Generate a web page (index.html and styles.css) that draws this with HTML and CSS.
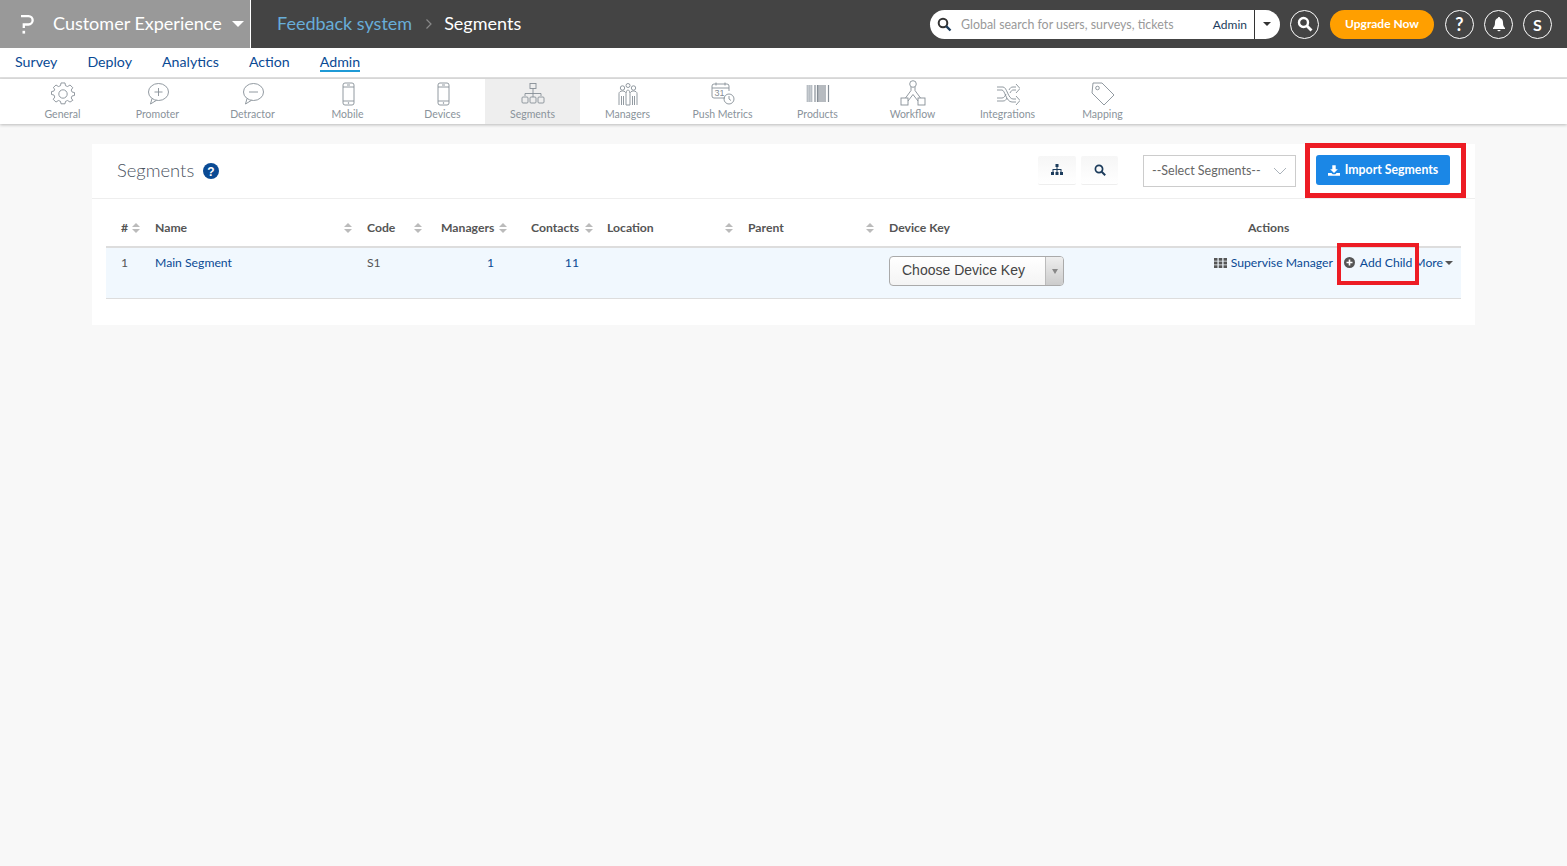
FILE: index.html
```html
<!DOCTYPE html>
<html lang="en">
<head>
<meta charset="utf-8">
<title>Segments</title>
<link rel="stylesheet" href="styles.css">
</head>
<body>
<header class="topbar">
  <div class="brand">
    <svg class="brand-logo" width="13" height="19" viewBox="0 0 13 19"><path d="M0 1.200h7.500a4 4 0 0 1 0 8.300H2.800v3.500" fill="none" stroke="#fff" stroke-width="2.300"/><rect x="1.500" y="15.800" width="2.600" height="2.800" fill="#fff"/></svg>
    <span class="brand-name">Customer Experience</span>
    <span class="caret-white"></span>
  </div>
  <div class="crumbs">
    <span class="crumb-link">Feedback system</span>
    <svg class="crumb-sep" width="8" height="12" viewBox="0 0 8 12"><path d="M1.500 1.500 6 6l-4.500 4.500" fill="none" stroke="#8a8a8a" stroke-width="1.200"/></svg>
    <span class="crumb-now">Segments</span>
  </div>
  <div class="top-right">
    <div class="search">
      <svg class="search-ico" width="15" height="15" viewBox="0 0 15 15"><circle cx="6" cy="6" r="4.300" fill="none" stroke="#333" stroke-width="2"/><path d="m9.200 9.200 4.300 4.300" stroke="#1c3c5c" stroke-width="2.400"/></svg>
      <span class="search-ph">Global search for users, surveys, tickets</span>
      <span class="search-scope">Admin</span>
      <span class="search-drop"><span class="caret-dark"></span></span>
    </div>
    <span class="round"><svg width="16" height="16" viewBox="0 0 16 16"><circle cx="6.500" cy="6.500" r="4.500" fill="none" stroke="#fff" stroke-width="2.400"/><path d="m10 10 4.500 4.500" stroke="#fff" stroke-width="2.800"/></svg></span>
    <span class="upgrade">Upgrade Now</span>
    <span class="round round-help">?</span>
    <span class="round"><svg width="14" height="16" viewBox="0 0 14 16"><path d="M7 1c-.7 0-1.100.5-1.100 1.100C3.800 2.700 3 4.400 3 6.500c0 3-.8 4.300-2 5.500v1h12v-1c-1.200-1.200-2-2.500-2-5.500 0-2.100-.8-3.800-2.900-4.400C8.100 1.500 7.700 1 7 1Z M5.300 14a1.800 1.800 0 0 0 3.400 0Z" fill="#fff"/></svg></span>
    <span class="round round-user">S</span>
  </div>
</header>

<nav class="mainnav">
  <a>Survey</a><a>Deploy</a><a>Analytics</a><a>Action</a><a class="is-active">Admin</a>
</nav>

<nav class="subnav">
  <div class="tab"><svg class="ti" width="24" height="24" viewBox="0 0 24 24"><path d="M10 1.500h4l.5 2.800 2.100.9L19 3.600 21.800 6.400 20.200 8.800l.9 2.100 2.400.5v3l-2.400.5-.9 2.100 1.600 2.400L19 21.200l-2.400-1.600-2.100.9-.5 2.500h-4l-.5-2.500-2.100-.9L5 21.200l-2.800-2.800 1.600-2.400-.9-2.100-2.400-.5v-3l2.400-.5.9-2.100L2.200 6.400 5 3.600l2.400 1.600 2.100-.9Z" transform="translate(0 -.5) scale(1 .97)" stroke-linejoin="round"/><circle cx="12" cy="12" r="4.200"/></svg><span>General</span></div>
  <div class="tab"><svg class="ti" width="24" height="24" viewBox="0 0 24 24"><ellipse cx="12.500" cy="10" rx="10" ry="8.500"/><path d="M6 16.500 4.500 22l6-3.700M8.500 10h8M12.500 6v8"/></svg><span>Promoter</span></div>
  <div class="tab"><svg class="ti" width="24" height="24" viewBox="0 0 24 24"><ellipse cx="12.500" cy="10" rx="10" ry="8.500"/><path d="M6 16.500 4.500 22l6-3.700M8 10h9"/></svg><span>Detractor</span></div>
  <div class="tab"><svg class="ti" width="24" height="24" viewBox="0 0 24 24"><rect x="7" y="1" width="11" height="22" rx="2"/><path d="M7 5h11M7 19h11M11 3h3"/><circle cx="12.500" cy="21" r=".4"/></svg><span>Mobile</span></div>
  <div class="tab tab-tuck"><svg class="ti" width="24" height="24" viewBox="0 0 24 24"><rect x="7" y="1" width="11" height="22" rx="2"/><path d="M7 5h11M7 19h11M11 3h3"/><circle cx="12.500" cy="21" r=".4"/></svg><span>Devices</span></div>
  <div class="tab is-current"><svg class="ti" width="24" height="24" viewBox="0 0 24 24"><rect x="9" y="1.500" width="6" height="5"/><path d="M12 6.500v5M4 14v-2.500h16V14M12 11.500V15"/><rect x="1" y="15" width="6" height="6" rx="1"/><rect x="9" y="15" width="6" height="6" rx="1"/><rect x="17" y="15" width="6" height="6" rx="1"/></svg><span>Segments</span></div>
  <div class="tab"><svg class="ti" width="24" height="24" viewBox="0 0 24 24"><circle cx="12" cy="3.500" r="2"/><circle cx="6.500" cy="6" r="2.200"/><circle cx="17.500" cy="6" r="2.200"/><path d="M3 23V11.500C3 10 4.500 9 6.500 9S10 10 10 11.500V23M14 23V11.500C14 10 15.500 9 17.500 9S21 10 21 11.500V23M5.500 14v9M7.500 14v9M16.500 14v9M18.500 14v9M10 23h4M10 11c.5-2 1-3 2-3s1.500 1 2 3"/></svg><span>Managers</span></div>
  <div class="tab"><svg class="ti" width="24" height="24" viewBox="0 0 24 24"><path d="M14 16H3a2 2 0 0 1-2-2V4a2 2 0 0 1 2-2h13a2 2 0 0 1 2 2v5M1 6h17M5 .5v3M14 .5v3"/><text x="3.500" y="14" class="cal">31</text><circle cx="18" cy="17" r="5"/><path d="M18 14v3l2 1.500"/></svg><span>Push Metrics</span></div>
  <div class="tab"><svg class="ti ti-bars" width="24" height="24" viewBox="0 0 24 24"><path class="bars-light" d="M1.500 3v17M3.500 3v17M5.500 3v17"/><path d="M9 3v17M11.500 3v17M13 3v17M15 3v17M17 3v17M19 3v17M22.500 3v17"/></svg><span>Products</span></div>
  <div class="tab"><svg class="ti ti-flow" width="26" height="26" viewBox="0 0 26 26"><circle cx="13" cy="4" r="3.300"/><path d="M11 7v3.500L5.500 18M15 7v3.500L20.500 18M13 14.500 8 21M13 14.500 18 21"/><rect x="1" y="18" width="7" height="7"/><rect x="18" y="18" width="7" height="7"/></svg><span>Workflow</span></div>
  <div class="tab"><svg class="ti" width="24" height="24" viewBox="0 0 24 24"><path d="M1 5h6c4 0 5 12 10 12h3M1 8h5c3 0 4 12 10 12h4M1 16h5c2 0 3-2 4-4M1 19h6c2 0 3-1 4-3M13 8c1-2 2-3 4-3h3M14 11c1-2 2-3 3-3h3M20 2l4 4.500-4 4.500M20 14l4 4.500-4 4.500"/></svg><span>Integrations</span></div>
  <div class="tab"><svg class="ti" width="24" height="24" viewBox="0 0 24 24"><path d="M2 1h9l12 12-10 10L1 11Z"/><circle cx="6.500" cy="6" r="1.800"/></svg><span>Mapping</span></div>
</nav>

<main class="page">
  <section class="card">
    <div class="card-head">
      <h1 class="card-title">Segments</h1>
      <svg class="help" width="16" height="16" viewBox="0 0 16 16"><circle cx="8" cy="8" r="8" fill="#0a4a94"/><text x="8" y="12.500" class="help-q">?</text></svg>
      <div class="head-tools">
        <span class="tool tool-a"><svg width="12" height="11" viewBox="0 0 12 11"><path d="M4.500 0h3v3h-3zM0 8h3v3H0zM4.500 8h3v3h-3zM9 8h3v3H9zM5.500 3h1v2h4v3h-1V6h-3v2h-1V6h-3v2h-1V5h4z" fill="#1c3c5c"/></svg></span>
        <span class="tool tool-b"><svg width="12" height="12" viewBox="0 0 12 12"><circle cx="5" cy="5" r="3.600" fill="none" stroke="#1c3c5c" stroke-width="1.700"/><path d="m7.700 7.700 3.500 3.500" stroke="#1c3c5c" stroke-width="2"/></svg></span>
        <div class="select"><span>--Select Segments--</span><svg width="14" height="8" viewBox="0 0 14 8"><path d="m1 1 6 6 6-6" fill="none" stroke="#aab2ba" stroke-width="1"/></svg></div>
        <div class="import-wrap mark">
          <button class="btn-import"><svg width="12" height="11" viewBox="0 0 14 12"><path d="M5 0h4v4.500h2.500L7 9 2.500 4.500H5zM0 9h4l1.500 1.500h3L10 9h4v3H0z" fill="#fff"/></svg><span>Import Segments</span></button>
        </div>
      </div>
    </div>
    <div class="table-wrap">
      <table class="grid">
        <colgroup><col class="c1"><col class="c2"><col class="c3"><col class="c4"><col class="c5"><col class="c6"><col class="c7"><col class="c8"><col class="c9"></colgroup>
        <thead>
          <tr>
            <th><span class="th th-hash">#<i class="sort"></i></span></th>
            <th><span class="th th-wide">Name<i class="sort"></i></span></th>
            <th><span class="th th-wide">Code<i class="sort"></i></span></th>
            <th><span class="th th-mgr">Managers<i class="sort"></i></span></th>
            <th><span class="th th-con">Contacts<i class="sort"></i></span></th>
            <th><span class="th th-wide">Location<i class="sort"></i></span></th>
            <th><span class="th th-wide">Parent<i class="sort"></i></span></th>
            <th><span class="th">Device Key</span></th>
            <th class="th-actions">Actions</th>
          </tr>
        </thead>
        <tbody>
          <tr>
            <td class="muted">1</td>
            <td class="link">Main Segment</td>
            <td class="muted">S1</td>
            <td class="link num num-m">1</td>
            <td class="link num num-c">11</td>
            <td></td>
            <td></td>
            <td class="cell-key"><div class="chosen"><span class="chosen-text">Choose Device Key</span><span class="chosen-arrow"><i></i></span></div></td>
            <td class="cell-actions">
              <div class="actions">
                <span class="act"><svg width="13" height="10" viewBox="0 0 13 10"><path d="M0 0h3.500v2.800H0zM4.700 0h3.600v2.800H4.700zM9.500 0H13v2.800H9.500zM0 3.600h3.500v2.800H0zM4.700 3.600h3.600v2.800H4.700zM9.500 3.600H13v2.800H9.500zM0 7.200h3.500V10H0zM4.700 7.200h3.600V10H4.700zM9.500 7.200H13V10H9.500z" fill="#555"/></svg>Supervise Manager</span>
                <span class="act act-child"><svg width="11" height="11" viewBox="0 0 11 11"><circle cx="5.500" cy="5.500" r="5.500" fill="#555"/><path d="M5.500 2.500v6M2.500 5.500h6" stroke="#fff" stroke-width="1.600"/></svg>Add Child</span>
                <span class="act act-more">More<i class="caret-more"></i></span>
              </div>
            </td>
          </tr>
        </tbody>
      </table>
    </div>
  </section>
</main>
</body>
</html>
```
FILE: styles.css
```css
*, *::before, *::after { box-sizing: border-box; }
html, body { margin: 0; height: 100%; }
body {
  background: #f8f8f8;
  font-family: "Lato", "Noto Sans", sans-serif;
  color: #555;
  overflow: hidden;
}

.topbar { display: flex; height: 48px; background: #444; align-items: stretch; }
.brand {
  width: 251px; background: #999; border-right: 1px solid #fff; flex: none;
  display: flex; align-items: center; padding-left: 21px; color: #fff; white-space: nowrap;
}
.brand-logo { margin-right: 19px; flex: none; }
.brand-name { font-size: 18px; padding-bottom: 2px; }
.caret-white {
  margin-left: 10px; width: 0; height: 0; flex: none;
  border-left: 6px solid transparent; border-right: 6px solid transparent; border-top: 6px solid #fff;
}
.crumbs { display: flex; align-items: center; padding: 0 0 2px 26px; font-size: 18px; white-space: nowrap; }
.crumb-link { color: #68add8; }
.crumb-sep { margin: 2px 11px 0 13px; }
.crumb-now { color: #fff; }
.top-right { margin-left: auto; display: flex; align-items: center; padding-right: 15px; }
.search {
  width: 350px; height: 29px; background: #fff; border-radius: 15px;
  display: flex; align-items: center; padding-left: 7px; margin-right: 10px;
}
.search-ico { margin-right: 9px; flex: none; }
.search-ph { font-size: 12.400px; color: #999; flex: 1; white-space: nowrap; }
.search-scope { font-size: 12px; color: #1c3c5c; padding-right: 7px; }
.search-drop {
  width: 26px; height: 29px; border-left: 1px solid #333;
  display: flex; align-items: center; justify-content: center;
}
.caret-dark {
  width: 0; height: 0; margin-right: 2px;
  border-left: 4px solid transparent; border-right: 4px solid transparent; border-top: 4px solid #333;
}
.round {
  width: 29px; height: 29px; border: 1px solid #fff; border-radius: 50%;
  display: flex; align-items: center; justify-content: center;
  color: #fff; font-weight: 700; font-size: 16px; flex: none;
}
.upgrade {
  width: 104px; height: 29px; margin: 0 11px; background: #ff9f00; border-radius: 15px;
  color: #fff; font-size: 12px; font-weight: 700;
  display: flex; align-items: center; justify-content: center; padding-bottom: 2px;
}
.round-help { font-size: 18px; margin-right: 10px; }
.round-user { margin-left: 10px; }

.mainnav {
  height: 31px; background: #fff; border-bottom: 2px solid #e0e0e0;
  display: flex; gap: 30px; padding-left: 15px; align-items: flex-start;
  font-size: 14.200px; color: #0a4a94;
}
.mainnav a { padding-top: 4px; height: 26px; line-height: 19px; }
.mainnav .is-active { border-bottom: 2px solid #1f9ad6; height: 24px; }

.subnav {
  height: 45px; background: #fff; display: flex; padding-left: 15px;
  box-shadow: 0 1px 3px rgba(0,0,0,.25);
  position: relative;
}
.tab {
  width: 95px; display: flex; flex-direction: column; align-items: center;
  font-size: 10.500px; color: #8a939b; padding-top: 3px; white-space: nowrap;
}
.tab span { margin-top: 1px; line-height: 14px; }
.tab.is-current { background: #eee; }
.tab-tuck { margin-right: -5px; position: relative; z-index: 1; }
.ti { fill: none; stroke: #868e96; stroke-width: .9; height: 24px; flex: none; }
.ti-bars { stroke-width: 1.200; }
.bars-light { stroke: #b8bec4; stroke-width: 1.800; }
.ti-flow { margin-top: -2px; width: 26px; height: 26px; }
.cal { font: 9px "Liberation Sans", sans-serif; fill: #868e96; stroke: none; }

.page { padding: 20px 92px 0; }
.card { background: #fff; height: 181px; }
.card-head {
  height: 55px; border-bottom: 1px solid #eee;
  display: flex; align-items: center; padding-left: 25px;
}
.card-title { font-size: 18.400px; font-weight: 300; margin: 0 9px 2px 0; color: #4a5260; }
.help { flex: none; }
.help-q { font: 700 12px "Liberation Sans", sans-serif; fill: #fff; text-anchor: middle; }
.head-tools { margin-left: auto; display: flex; align-items: center; height: 100%; position: relative; }
.tool {
  height: 29px; margin-top: -2px; background: linear-gradient(#f6f6f6, #fff);
  border-bottom: 1px solid #eee; border-radius: 2px;
  display: flex; align-items: center; justify-content: center;
}
.tool-a { width: 38px; margin-right: 5px; }
.tool-b { width: 37px; margin-right: 25px; }
.select {
  width: 153px; height: 32px; border: 1px solid #ccc; margin-right: 20px;
  display: flex; align-items: center; justify-content: space-between;
  padding: 0 8px 1px 8px; font-size: 12.500px; color: #666; white-space: nowrap;
}
.import-wrap { padding-right: 25px; }
.btn-import {
  width: 134px; height: 30px; margin-top: -2px; background: #1b87e6; border: 0; border-radius: 3px;
  color: #fff; font: 700 12.300px "Lato", "Noto Sans", sans-serif;
  display: flex; align-items: center; justify-content: center; gap: 5px; padding: 0;
}
.btn-import span { padding-bottom: 2px; }
.mark::after {
  content: ""; position: absolute; right: 9px; top: -1px; width: 161px; height: 55px;
  border: 5px solid #ed1c24; pointer-events: none;
}

.table-wrap { padding: 0 14px; }
.grid { width: 100%; border-collapse: collapse; table-layout: fixed; font-size: 12.200px; }
.c1 { width: 49px; } .c2 { width: 212px; } .c3 { width: 70px; } .c4 { width: 80px; }
.c5 { width: 90px; } .c6 { width: 141px; } .c7 { width: 141px; } .c8 { width: 261px; } .c9 { width: 311px; }
.grid th {
  height: 48px; border-bottom: 2px solid #ddd; font-size: 12.200px; font-weight: 700; color: #555;
  text-align: left; padding: 10px 0 0 0; vertical-align: middle;
}
.th { display: flex; align-items: center; justify-content: space-between; white-space: nowrap; }
.th-hash { padding: 0 15px; }
.th-wide { padding-right: 15px; }
.th-mgr { padding: 0 10px 0 4px; }
.th-con { padding: 0 14px; }
.sort { display: inline-block; width: 8px; height: 10px; position: relative; flex: none; }
.sort::before, .sort::after {
  content: ""; position: absolute; left: 0; width: 0; height: 0;
  border-left: 4px solid transparent; border-right: 4px solid transparent;
}
.sort::before { top: 0; border-bottom: 4px solid #bbb; }
.sort::after { bottom: 0; border-top: 4px solid #bbb; }
.grid th.th-actions { padding-left: 98px; }
.grid tbody tr { background: #f1f8fe; }
.grid td {
  height: 51px; border-bottom: 1px solid #ddd; vertical-align: top; padding: 7px 0 0; white-space: nowrap; color: #555;
}
.grid td:first-child { padding-left: 15px; }
.grid td.link { color: #0a4a94; }
.grid td.num { text-align: right; }
.grid td.num-m { padding-right: 23px; }
.grid td.num-c { padding-right: 28px; }
.grid td.cell-key { padding-top: 8px; }
.chosen {
  width: 175px; height: 30px; border: 1px solid #aaa; border-radius: 4px;
  background: linear-gradient(#fff, #f4f4f4); display: flex; align-items: stretch;
}
.chosen-text { flex: 1; font: 14px/26px "Liberation Sans", sans-serif; color: #444; padding-left: 12px; }
.chosen-arrow {
  width: 18px; border-left: 1px solid #bbb; background: linear-gradient(#eee, #ccc);
  display: flex; align-items: center; justify-content: center; border-radius: 0 3px 3px 0;
}
.chosen-arrow i {
  width: 0; height: 0; border-left: 3px solid transparent; border-right: 3px solid transparent; border-top: 5px solid #888;
}
.actions { display: flex; justify-content: flex-end; align-items: center; color: #0a4a94; padding-right: 8px; }
.act { display: flex; align-items: center; gap: 4px; }
.act-child { margin-left: 11px; position: relative; }
.act-child svg { margin-right: 1px; }
.act-more { margin-left: 2px; gap: 2px; }
.caret-more {
  width: 0; height: 0; border-left: 4px solid transparent; border-right: 4px solid transparent; border-top: 4px solid #555;
}
.act-child::after {
  content: ""; position: absolute; left: -7px; right: -7px; top: -12px; height: 42px;
  border: 4px solid #ed1c24; pointer-events: none;
}
```
